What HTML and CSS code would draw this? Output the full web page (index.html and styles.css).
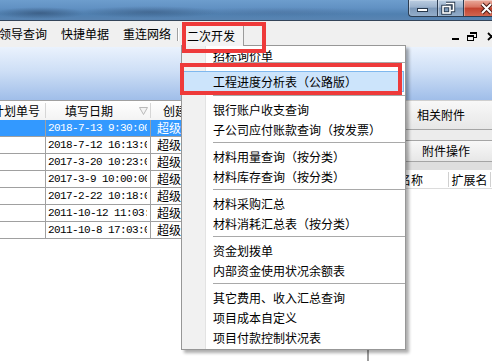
FILE: index.html
```html
<!DOCTYPE html>
<html lang="zh-CN">
<head>
<meta charset="utf-8">
<title>二次开发</title>
<link rel="stylesheet" href="styles.css">
</head>
<body>
<div class="window">
  <div class="titlebar">
    <div class="caps">
      <span class="cap cap-min"><svg width="28" height="16" viewBox="0 0 28 16"><rect x="8.5" y="8.5" width="10" height="3" fill="#fff" stroke="#26374b" stroke-width="1"/></svg></span>
      <span class="cap cap-max"><svg width="25" height="16" viewBox="0 0 25 16"><path d="M8 3.5h7.5v7h-3" fill="none" stroke="#26374b" stroke-width="3.4"/><rect x="5" y="6.5" width="7" height="6.5" fill="none" stroke="#26374b" stroke-width="3.4"/><path d="M8 3.5h7.5v7h-3" fill="none" stroke="#fff" stroke-width="1.6"/><rect x="5" y="6.5" width="7" height="6.5" fill="none" stroke="#fff" stroke-width="1.6"/></svg></span>
      <span class="cap cap-close"><svg width="43" height="16" viewBox="0 0 43 16"><path d="M18 4l9 9M27 4l-9 9" stroke="#4a1a14" stroke-width="4"/><path d="M18 4l9 9M27 4l-9 9" stroke="#fff" stroke-width="2"/></svg></span>
    </div>
  </div>

  <div class="menubar">
    <span class="mi first">领导查询</span>
    <span class="mi">快捷单据</span>
    <span class="mi">重连网络</span>
    <span class="msep"></span>
    <span class="mi open">二次开发</span>
    <span class="mdi"><svg width="44" height="9" viewBox="0 0 44 9"><rect x="0" y="6" width="7" height="2" fill="#000"/><rect x="18" y="0" width="7" height="2" fill="#000"/><rect x="24" y="2" width="1" height="4" fill="#000"/><rect x="22" y="5" width="2" height="1" fill="#000"/><rect x="15" y="3" width="7" height="2" fill="#000"/><rect x="15" y="5" width="1" height="4" fill="#000"/><rect x="21" y="5" width="1" height="4" fill="#000"/><rect x="15" y="8" width="7" height="1" fill="#000"/><path d="M36 1l7 7M43 1l-7 7" stroke="#000" stroke-width="1.8"/></svg></span>
  </div>

  <div class="band"></div>

  <div class="content">
    <div class="grid">
      <div class="ghead">
        <div class="c c1"><span class="shift">计划单号</span></div>
        <div class="c c2"><span>填写日期</span><svg class="sort" width="9" height="8" viewBox="0 0 9 8"><path d="M0.5 0.5h8l-4 7z" fill="#f4f4f4" stroke="#b9b9b9"/></svg></div>
        <div class="c c3"><span>创建人</span></div>
        <div class="c c4"><span>单据状态</span></div>
      </div>
      <div class="row sel"><div class="c c1"></div><div class="c c2"><span>2018-7-13 9:30:00</span></div><div class="c c3">超级管理员</div><div class="c c4"></div></div>
      <div class="row"><div class="c c1"></div><div class="c c2"><span>2018-7-12 16:13:00</span></div><div class="c c3">超级管理员</div><div class="c c4"></div></div>
      <div class="row"><div class="c c1"></div><div class="c c2"><span>2017-3-20 10:23:00</span></div><div class="c c3">超级管理员</div><div class="c c4"></div></div>
      <div class="row"><div class="c c1"></div><div class="c c2"><span>2017-3-9 10:00:00</span></div><div class="c c3">超级管理员</div><div class="c c4"></div></div>
      <div class="row"><div class="c c1"></div><div class="c c2"><span>2017-2-22 10:18:00</span></div><div class="c c3">超级管理员</div><div class="c c4"></div></div>
      <div class="row"><div class="c c1"></div><div class="c c2"><span>2011-10-12 11:03:00</span></div><div class="c c3">超级管理员</div><div class="c c4"></div></div>
      <div class="row"><div class="c c1"></div><div class="c c2"><span>2011-10-8 17:03:00</span></div><div class="c c3">超级管理员</div><div class="c c4"></div></div>
    </div>
    <div class="splitter"></div>
    <div class="side">
      <div class="sbtn sbtn1">相关附件</div>
      <div class="sband1"></div>
      <div class="sbtn sbtn2">附件操作</div>
      <div class="sband2"></div>
      <div class="lhead"><span class="lc lc1">名称</span><span class="lc lc2">扩展名</span></div>
      <div class="lbody"></div>
    </div>
  </div>

  <div class="dropdown">
    <div class="dd-item first">招标询价单</div>
    <div class="dd-sep"></div>
    <div class="dd-item hot">工程进度分析表（公路版）</div>
    <div class="dd-sep"></div>
    <div class="dd-item">银行账户收支查询</div>
    <div class="dd-item">子公司应付账款查询（按发票）</div>
    <div class="dd-sep"></div>
    <div class="dd-item">材料用量查询（按分类）</div>
    <div class="dd-item">材料库存查询（按分类）</div>
    <div class="dd-sep"></div>
    <div class="dd-item">材料采购汇总</div>
    <div class="dd-item">材料消耗汇总表（按分类）</div>
    <div class="dd-sep"></div>
    <div class="dd-item">资金划拨单</div>
    <div class="dd-item">内部资金使用状况余额表</div>
    <div class="dd-sep"></div>
    <div class="dd-item">其它费用、收入汇总查询</div>
    <div class="dd-item">项目成本自定义</div>
    <div class="dd-item">项目付款控制状况表</div>
  </div>

  <div class="mark mark1"></div>
  <div class="mark mark2"></div>
</div>
</body>
</html>
```

FILE: styles.css
```css
* { box-sizing: border-box; }
html, body { margin: 0; padding: 0; }
body {
  width: 492px;
  height: 361px;
  overflow: hidden;
  background: #fff;
  font-family: "Noto Sans CJK SC", "Noto Sans", sans-serif;
  font-size: 12px;
  color: #000;
}
.window {
  position: relative;
  width: 492px;
  height: 361px;
  overflow: hidden;
  display: flex;
  flex-direction: column;
}

/* title bar */
.titlebar {
  flex: none;
  height: 21px;
  border-bottom: 1px solid #34455a;
  display: flex;
  justify-content: flex-end;
  align-items: flex-start;
  background:
    radial-gradient(ellipse 45px 6px at 40px 13px, rgba(35, 55, 85, 0.45), transparent),
    radial-gradient(ellipse 70px 6px at 150px 12px, rgba(35, 55, 85, 0.35), transparent),
    radial-gradient(ellipse 90px 5px at 280px 12px, rgba(70, 95, 135, 0.25), transparent),
    linear-gradient(180deg, #6d9dcd 0%, #6191c3 40%, #5080b0 70%, #5984b2 100%);
}
.caps { display: flex; margin-right: -15px; }
.cap {
  display: block;
  height: 17px;
  border-left: 1px solid #2c3d52;
  border-bottom: 1px solid #2c3d52;
  box-shadow: inset 1px 1px 0 rgba(255, 255, 255, 0.35);
}
.cap svg { display: block; }
.cap-min {
  width: 29px;
  border-bottom-left-radius: 4px;
  background: linear-gradient(180deg, #bccee2 0%, #9bb2cc 45%, #7c98b8 50%, #93adca 100%);
}
.cap-max {
  width: 26px;
  background: linear-gradient(180deg, #bccee2 0%, #9bb2cc 45%, #7c98b8 50%, #93adca 100%);
}
.cap-close {
  width: 44px;
  border-right: 1px solid #2c3d52;
  background: linear-gradient(180deg, #e9ab9c 0%, #d8725f 45%, #c2422e 50%, #d06550 100%);
}

/* menu bar */
.menubar {
  flex: none;
  height: 26px;
  background: #f0f0f0;
  display: flex;
  align-items: center;
  gap: 14px;
  line-height: 16px;
  white-space: nowrap;
}
.mi { flex: none; }
.mi.first { margin-left: -1px; }
.msep {
  flex: none;
  width: 2px;
  height: 13px;
  margin-left: -8px;
  border-left: 1px solid #a0a0a0;
  border-right: 1px solid #fff;
}
.mi.open {
  align-self: flex-start;
  position: relative;
  z-index: 5;
  margin-top: 3px;
  margin-left: -11px;
  height: 22px;
  line-height: 21px;
  padding: 0 8px 0 4px;
  border: 1px solid #9b9b9b;
  border-bottom: 0;
  background: #f4f4f4;
}
.mdi {
  margin-left: auto;
  margin-right: -4px;
  align-self: flex-start;
  margin-top: 11px;
  display: flex;
}
.mdi svg { display: block; }

/* blue band */
.band {
  flex: none;
  height: 53px;
  background: linear-gradient(180deg, #eaf2fd 0%, #cedff6 45%, #a0bee9 100%);
}

/* content */
.content {
  flex: 1;
  display: flex;
  min-height: 0;
}
.grid {
  flex: none;
  width: 367px;
  border-top: 1px solid #a0a0a0;
  background: #fff;
  overflow: hidden;
}
.ghead {
  display: flex;
  height: 19px;
  align-items: center;
  background: linear-gradient(180deg, #ffffff, #f3f3f3);
}
.c {
  flex: none;
  white-space: nowrap;
  overflow: hidden;
}
.c1 { width: 46px; }
.c2 { width: 105px; }
.c3 { width: 80px; }
.c4 { width: 136px; }
.ghead .c {
  height: 15px;
  line-height: 15px;
  display: flex;
  align-items: center;
  border-right: 1px solid #d6d6d6;
}
.ghead .c span { flex: none; }
.ghead .c1 .shift { margin-left: -8px; }
.ghead .c2 { padding-left: 19px; }
.ghead .c3 { padding-left: 12px; }
.ghead .c4 { padding-left: 12px; border-right: 0; }
.sort { flex: none; margin-left: auto; margin-right: 2px; display: block; }

.row {
  display: flex;
  height: 17px;
  line-height: 16px;
  border-bottom: 1px solid #a0a0a0;
}
.row .c { border-right: 1px solid #a0a0a0; }
.row .c4 { border-right: 0; }
.row .c2 {
  padding-left: 2px;
  font-family: "Liberation Mono", "DejaVu Sans Mono", monospace;
  font-size: 11px;
  letter-spacing: -0.6px;
}
.row .c2 span { display: block; width: 99px; overflow: hidden; }
.row .c3 { padding-left: 6px; }
.row.sel { background: #3399ff; color: #fff; }

.splitter {
  flex: none;
  width: 2px;
  background: #9c9c9c;
}
.side {
  flex: 1;
  display: flex;
  flex-direction: column;
  background: #fff;
  min-width: 0;
}
.sbtn {
  flex: none;
  white-space: nowrap;
  background: linear-gradient(180deg, #f8f8f8, #e7e7e7);
  border-bottom: 1px solid #a5a5a5;
}
.sbtn1 {
  height: 30px;
  line-height: 28px;
  padding-left: 48px;
  border-top: 1px solid #cfcfcf;
}
.sband1 {
  flex: none;
  height: 11px;
  background: #ececec;
  border-bottom: 1px solid #a5a5a5;
}
.sbtn2 {
  height: 21px;
  line-height: 20px;
  padding-left: 53px;
}
.sband2 {
  flex: none;
  height: 8px;
  background: #dedede;
}
.lhead {
  flex: none;
  height: 19px;
  display: flex;
  align-items: center;
  border-bottom: 1px solid #dcdcdc;
  background: #fff;
}
.lc {
  flex: none;
  height: 15px;
  line-height: 15px;
  text-align: center;
  white-space: nowrap;
  border-right: 1px solid #d0d0d0;
}
.lc1 { width: 80px; padding-left: 5px; }
.lc2 { width: 42px; }
.lbody { flex: 1; }

/* dropdown menu */
.dropdown {
  position: absolute;
  left: 181px;
  top: 45px;
  width: 225px;
  height: 305px;
  z-index: 4;
  border: 1px solid #979797;
  background: linear-gradient(90deg, #f1f1f1 0, #f1f1f1 23px, #e3e3e3 23px, #e3e3e3 24px, #ffffff 24px);
  box-shadow: 3px 3px 3px rgba(0, 0, 0, 0.32);
  white-space: nowrap;
}
.dd-item {
  height: 20px;
  line-height: 20px;
  padding-left: 31px;
}
.dd-item.first { height: 14px; }
.dd-item.hot {
  margin: 4px 1px 1px 1px;
  height: 21px;
  line-height: 19px;
  padding-left: 29px;
  border: 1px solid #7fb8ee;
  background: #cce4fb;
}
.dd-sep {
  height: 7px;
  padding-top: 2px;
  margin-left: 31px;
}
.dd-sep::before {
  content: "";
  display: block;
  border-top: 1px solid #a9a9a9;
}

/* red annotation frames */
.mark {
  position: absolute;
  z-index: 10;
  border: 4px solid #ee3a3a;
}
.mark1 { left: 182px; top: 22px; width: 84px; height: 31px; }
.mark2 { left: 180px; top: 63px; width: 222px; height: 32px; }
```
